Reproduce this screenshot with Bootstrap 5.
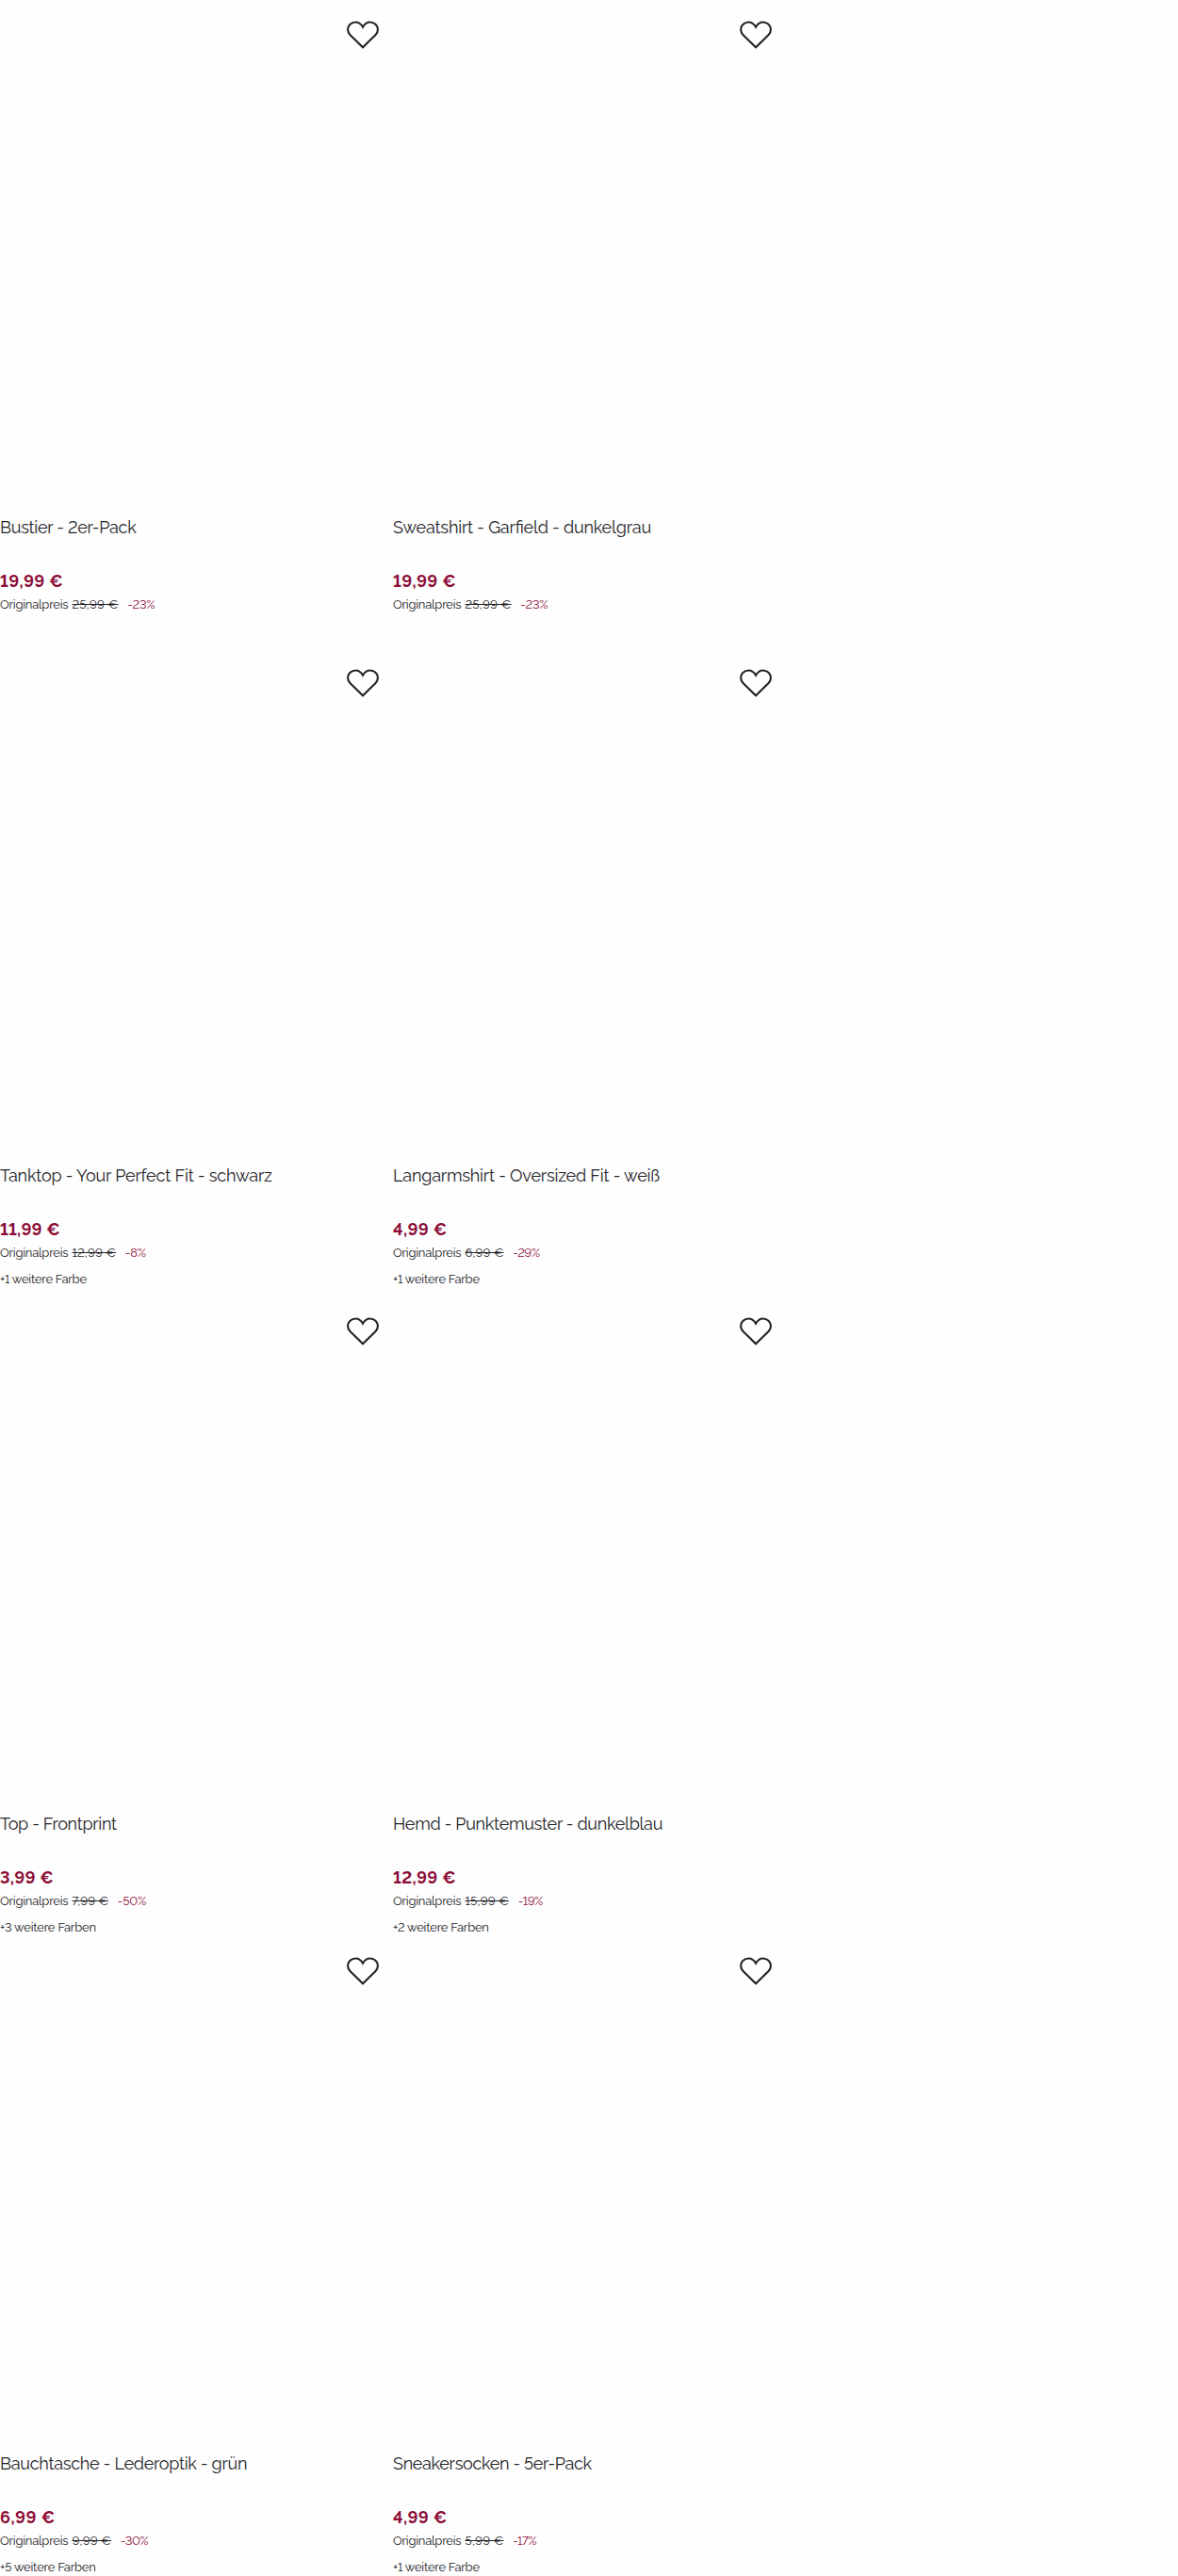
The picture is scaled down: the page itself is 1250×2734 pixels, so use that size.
<!DOCTYPE html>
<html lang="de">
<head>
<meta charset="utf-8">
<meta name="viewport" content="width=device-width, initial-scale=1">
<title>Produktübersicht</title>
<link rel="stylesheet" href="https://cdn.jsdelivr.net/npm/bootstrap@5.3.0/dist/css/bootstrap.min.css">
<style>
  body { background: #fefefe; color: #222226; font-family: Raleway, Lato, sans-serif; font-feature-settings: "lnum", "liga"; }
  .product-list { width: 834px; }
  .product { width: 417px; height: 688px; }
  .product-list > .product:nth-child(n+5) { height: 679px; }
  .product-media { height: 548px; }
  .wish { top: 20px; left: 365px; width: 40px; height: 34px; line-height: 0; }
  .product-title { font-size: 18px; line-height: 24px; font-weight: 400; margin: 0 0 33px; letter-spacing: var(--t); }
  .price-now { font-size: 18px; line-height: 24px; font-weight: 700; color: #8c0c36; margin: 0 0 3px; letter-spacing: var(--p); }
  .price-old { font-size: 13px; line-height: 20px; height: 20px; letter-spacing: -.23px; }
  .price-old s { margin-left: 4.2px; letter-spacing: var(--o); }
  .price-old .saving { margin-left: 9.8px; color: #8c0c36; letter-spacing: var(--d); }
  .more-colors { font-size: 13px; line-height: 19px; margin: 8px 0 0; letter-spacing: -.24px; }
  .more-colors.plural { letter-spacing: -.21px; }
  .bustier { --t: -.26px; --p: .35px; --o: .27px; --d: -.2px; }
  .sweatshirt { --t: -.18px; --p: .35px; --o: .27px; --d: -.2px; }
  .tanktop { --t: -.17px; --p: .2px; --o: .17px; --d: -.1px; }
  .langarmshirt { --t: -.19px; --p: .35px; --o: .13px; --d: -.5px; }
  .top-print { --t: -.29px; --p: .25px; --o: .05px; --d: -.1px; }
  .hemd { --t: -.28px; --p: .35px; --o: .2px; --d: -.4px; }
  .bauchtasche { --t: -.26px; --p: .5px; --o: .23px; --d: -.5px; }
  .socken { --t: -.3px; --p: .35px; --o: .23px; --d: -.55px; }
</style>
<script src="https://cdn.jsdelivr.net/npm/bootstrap@5.3.0/dist/js/bootstrap.bundle.min.js"></script>
</head>
<body>
<svg class="d-none" aria-hidden="true">
  <symbol id="heart" viewBox="0 0 40 34">
    <path d="M20 8.6C22 5.2 24.6 3.5 27.6 3.5C32.2 3.5 35.9 7 35.9 11.4C35.9 13.7 35 15.5 33.3 17.2L20 30.2L6.7 17.2C5 15.5 4.1 13.7 4.1 11.4C4.1 7 7.8 3.5 12.4 3.5C15.4 3.5 18 5.2 20 8.6Z" fill="none" stroke="#222226" stroke-width="2.1" stroke-linejoin="miter"/>
  </symbol>
</svg>
<main class="product-list d-flex flex-wrap">
  <article class="product bustier position-relative">
    <button class="wish btn p-0 border-0 position-absolute" aria-label="Merken"><svg width="40" height="34"><use href="#heart"/></svg></button>
    <div class="product-media"></div>
    <h2 class="product-title">Bustier - 2er-Pack</h2>
    <p class="price-now">19,99 €</p>
    <div class="price-old d-flex"><span>Originalpreis</span><s>25,99 €</s><span class="saving">-23%</span></div>
  </article>
  <article class="product sweatshirt position-relative">
    <button class="wish btn p-0 border-0 position-absolute" aria-label="Merken"><svg width="40" height="34"><use href="#heart"/></svg></button>
    <div class="product-media"></div>
    <h2 class="product-title">Sweatshirt - Garfield - dunkelgrau</h2>
    <p class="price-now">19,99 €</p>
    <div class="price-old d-flex"><span>Originalpreis</span><s>25,99 €</s><span class="saving">-23%</span></div>
  </article>
  <article class="product tanktop position-relative">
    <button class="wish btn p-0 border-0 position-absolute" aria-label="Merken"><svg width="40" height="34"><use href="#heart"/></svg></button>
    <div class="product-media"></div>
    <h2 class="product-title">Tanktop - Your Perfect Fit - schwarz</h2>
    <p class="price-now">11,99 €</p>
    <div class="price-old d-flex"><span>Originalpreis</span><s>12,99 €</s><span class="saving">-8%</span></div>
    <p class="more-colors">+1 weitere Farbe</p>
  </article>
  <article class="product langarmshirt position-relative">
    <button class="wish btn p-0 border-0 position-absolute" aria-label="Merken"><svg width="40" height="34"><use href="#heart"/></svg></button>
    <div class="product-media"></div>
    <h2 class="product-title">Langarmshirt - Oversized Fit - weiß</h2>
    <p class="price-now">4,99 €</p>
    <div class="price-old d-flex"><span>Originalpreis</span><s>6,99 €</s><span class="saving">-29%</span></div>
    <p class="more-colors">+1 weitere Farbe</p>
  </article>
  <article class="product top-print position-relative">
    <button class="wish btn p-0 border-0 position-absolute" aria-label="Merken"><svg width="40" height="34"><use href="#heart"/></svg></button>
    <div class="product-media"></div>
    <h2 class="product-title">Top - Frontprint</h2>
    <p class="price-now">3,99 €</p>
    <div class="price-old d-flex"><span>Originalpreis</span><s>7,99 €</s><span class="saving">-50%</span></div>
    <p class="more-colors plural">+3 weitere Farben</p>
  </article>
  <article class="product hemd position-relative">
    <button class="wish btn p-0 border-0 position-absolute" aria-label="Merken"><svg width="40" height="34"><use href="#heart"/></svg></button>
    <div class="product-media"></div>
    <h2 class="product-title">Hemd - Punktemuster - dunkelblau</h2>
    <p class="price-now">12,99 €</p>
    <div class="price-old d-flex"><span>Originalpreis</span><s>15,99 €</s><span class="saving">-19%</span></div>
    <p class="more-colors plural">+2 weitere Farben</p>
  </article>
  <article class="product bauchtasche position-relative">
    <button class="wish btn p-0 border-0 position-absolute" aria-label="Merken"><svg width="40" height="34"><use href="#heart"/></svg></button>
    <div class="product-media"></div>
    <h2 class="product-title">Bauchtasche - Lederoptik - grün</h2>
    <p class="price-now">6,99 €</p>
    <div class="price-old d-flex"><span>Originalpreis</span><s>9,99 €</s><span class="saving">-30%</span></div>
    <p class="more-colors plural">+5 weitere Farben</p>
  </article>
  <article class="product socken position-relative">
    <button class="wish btn p-0 border-0 position-absolute" aria-label="Merken"><svg width="40" height="34"><use href="#heart"/></svg></button>
    <div class="product-media"></div>
    <h2 class="product-title">Sneakersocken - 5er-Pack</h2>
    <p class="price-now">4,99 €</p>
    <div class="price-old d-flex"><span>Originalpreis</span><s>5,99 €</s><span class="saving">-17%</span></div>
    <p class="more-colors">+1 weitere Farbe</p>
  </article>
</main>
</body>
</html>
